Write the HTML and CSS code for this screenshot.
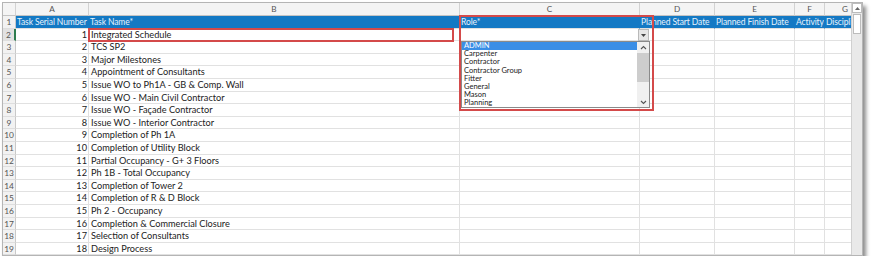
FILE: index.html
```html
<!DOCTYPE html>
<html lang="en">
<head>
    <meta charset="UTF-8">
    <title>Task Import - Role</title>
    <link rel="stylesheet" href="styles.css">
</head>
<body>
    <div class="window">
        <div class="sheet">
            <div class="row col-heads">
                <div class="corner"></div>
                <div>A</div><div>B</div><div>C</div><div>D</div><div>E</div><div>F</div><div class="right">G</div>
            </div>
            <div class="row titles">
                <div class="num">1</div>
                <div class="clip">Task Serial Number</div>
                <div>Task Name*</div>
                <div>Role*</div>
                <div>Planned Start Date</div>
                <div>Planned Finish Date</div>
                <div>Activity</div>
                <div class="clip">Discipline</div>
            </div>
            <div class="row active"><div class="num">2</div><div class="id">1</div><div class="name">Integrated Schedule</div><div></div><div></div><div></div><div></div><div></div></div>
            <div class="row"><div class="num">3</div><div class="id">2</div><div class="name">TCS SP2</div><div></div><div></div><div></div><div></div><div></div></div>
            <div class="row"><div class="num">4</div><div class="id">3</div><div class="name">Major Milestones</div><div></div><div></div><div></div><div></div><div></div></div>
            <div class="row"><div class="num">5</div><div class="id">4</div><div class="name">Appointment of Consultants</div><div></div><div></div><div></div><div></div><div></div></div>
            <div class="row"><div class="num">6</div><div class="id">5</div><div class="name">Issue WO to Ph1A - GB &amp; Comp. Wall</div><div></div><div></div><div></div><div></div><div></div></div>
            <div class="row"><div class="num">7</div><div class="id">6</div><div class="name">Issue WO - Main Civil Contractor</div><div></div><div></div><div></div><div></div><div></div></div>
            <div class="row"><div class="num">8</div><div class="id">7</div><div class="name">Issue WO - Façade Contractor</div><div></div><div></div><div></div><div></div><div></div></div>
            <div class="row"><div class="num">9</div><div class="id">8</div><div class="name">Issue WO - Interior Contractor</div><div></div><div></div><div></div><div></div><div></div></div>
            <div class="row"><div class="num">10</div><div class="id">9</div><div class="name">Completion of Ph 1A</div><div></div><div></div><div></div><div></div><div></div></div>
            <div class="row"><div class="num">11</div><div class="id">10</div><div class="name">Completion of Utility Block</div><div></div><div></div><div></div><div></div><div></div></div>
            <div class="row"><div class="num">12</div><div class="id">11</div><div class="name">Partial Occupancy - G+ 3 Floors</div><div></div><div></div><div></div><div></div><div></div></div>
            <div class="row"><div class="num">13</div><div class="id">12</div><div class="name">Ph 1B - Total Occupancy</div><div></div><div></div><div></div><div></div><div></div></div>
            <div class="row"><div class="num">14</div><div class="id">13</div><div class="name">Completion of Tower 2</div><div></div><div></div><div></div><div></div><div></div></div>
            <div class="row"><div class="num">15</div><div class="id">14</div><div class="name">Completion of R &amp; D Block</div><div></div><div></div><div></div><div></div><div></div></div>
            <div class="row"><div class="num">16</div><div class="id">15</div><div class="name">Ph 2 - Occupancy</div><div></div><div></div><div></div><div></div><div></div></div>
            <div class="row"><div class="num">17</div><div class="id">16</div><div class="name">Completion &amp; Commercial Closure</div><div></div><div></div><div></div><div></div><div></div></div>
            <div class="row"><div class="num">18</div><div class="id">17</div><div class="name">Selection of Consultants</div><div></div><div></div><div></div><div></div><div></div></div>
            <div class="row"><div class="num">19</div><div class="id">18</div><div class="name">Design Process</div><div></div><div></div><div></div><div></div><div></div></div>

            <!-- data validation dropdown on C2 -->
            <div class="drop-btn">
                <svg width="5" height="3" viewBox="0 0 5 3"><path d="M0 0H5L2.5 3Z" fill="#444"/></svg>
            </div>
            <div class="drop-list">
                <ul>
                    <li class="sel">ADMIN</li>
                    <li>Carpenter</li>
                    <li>Contractor</li>
                    <li>Contractor Group</li>
                    <li>Fitter</li>
                    <li>General</li>
                    <li>Mason</li>
                    <li>Planning</li>
                </ul>
                <div class="list-scroll">
                    <svg width="7" height="5" viewBox="0 0 7 5"><path d="M1 4L3.5 1.5L6 4" fill="none" stroke="#555" stroke-width="1.1"/></svg>
                    <div class="list-thumb"></div>
                    <svg width="7" height="5" viewBox="0 0 7 5"><path d="M1 1L3.5 3.5L6 1" fill="none" stroke="#555" stroke-width="1.1"/></svg>
                </div>
            </div>

            <!-- highlight boxes -->
            <div class="mark mark-name"></div>
            <div class="mark mark-role"></div>
        </div>
        <div class="vscroll">
            <div class="vs-btn">
                <svg width="5" height="3" viewBox="0 0 5 3"><path d="M0 3H5L2.5 0Z" fill="#666"/></svg>
            </div>
            <div class="vs-thumb"></div>
        </div>
    </div>
</body>
</html>
```

FILE: styles.css
```css
body {
    margin: 0;
    background: #fff;
    font-family: Lato, "Liberation Sans", sans-serif;
    font-size: 9.2px;
    color: #222;
}
.window {
    margin: 2px 0 0 2px;
    width: 859px;
    height: 252px;
    border: 1px solid #b5b5b5;
    display: flex;
    box-shadow: 3px 4px 4px rgba(0, 0, 0, 0.45);
    background: #fff;
}
.sheet {
    position: relative;
    width: 849px;
    overflow: hidden;
}
.row {
    display: grid;
    grid-template-columns: 13px 73px 371px 180px 75px 80px 30px 27px;
    height: 12.6px;
}
.row > div {
    box-sizing: border-box;
    border-right: 1px solid #e1e1e1;
    border-bottom: 1px solid #e1e1e1;
    line-height: 12px;
    white-space: nowrap;
    overflow: hidden;
}
.row .num {
    background: #f2f2f2;
    border-right: 1px solid #c9c9c9;
    border-bottom: 1px solid #dedede;
    color: #555;
    text-align: center;
    font-size: 8.4px;
}
.row.active .num {
    background: #e2e2e2;
    border-right: 2px solid #2e7d4f;
}
.row .id {
    text-align: right;
    padding-right: 1px;
}
.row .name {
    padding-left: 2px;
}

/* column letters */
.col-heads {
    height: 13px;
}
.col-heads > div {
    background: #f4f4f4;
    border-right: 1px solid #d2d2d2;
    border-bottom: 1px solid #c4c4c4;
    text-align: center;
    color: #555;
    font-size: 8.2px;
}
.col-heads .right {
    text-align: right;
    padding-right: 3px;
}
.col-heads .corner {
    background: #f4f4f4;
}

/* header row */
.titles > div {
    background: #1479c4;
    color: #e6f2fc;
    border-right: 1px solid #1479c4;
    border-bottom: 1px solid #e1e1e1;
    padding-left: 1px;
    font-size: 8.5px;
    letter-spacing: -0.1px;
}
.titles > div.num {
    background: #f2f2f2;
    color: #555;
    border-right: 1px solid #c9c9c9;
    padding-left: 0;
    font-size: 8.4px;
    letter-spacing: 0;
}
.titles .clip {
    text-overflow: clip;
}

/* dropdown */
.drop-btn {
    position: absolute;
    left: 635px;
    top: 26px;
    width: 11px;
    height: 12px;
    box-sizing: border-box;
    background: #e6e6e6;
    border: 1px solid #b9b9b9;
    display: flex;
    align-items: center;
    justify-content: center;
}
.drop-list {
    position: absolute;
    left: 458px;
    top: 38px;
    width: 189px;
    height: 67px;
    background: #fff;
    border: 1px solid #8a8a8a;
    box-sizing: border-box;
    display: flex;
}
.drop-list ul {
    flex: 1;
    list-style: none;
    margin: 0;
    padding: 0;
    font-size: 7.5px;
    color: #222;
}
.drop-list li {
    height: 8.2px;
    line-height: 8.4px;
    padding-left: 2px;
}
.drop-list li.sel {
    background: #3a8ee6;
    color: #fff;
}
.list-scroll {
    width: 12px;
    background: #f0f0f0;
    display: flex;
    flex-direction: column;
    align-items: center;
    padding: 3px 0 2px;
    box-sizing: border-box;
    gap: 3px;
}
.list-thumb {
    width: 12px;
    height: 29px;
    background: #cdcdcd;
    margin-bottom: auto;
}

/* annotation boxes */
.mark {
    position: absolute;
    border: 2px solid #d44a4a;
    box-sizing: border-box;
}
.mark-name {
    left: 85px;
    top: 25px;
    width: 366px;
    height: 14px;
}
.mark-role {
    left: 456px;
    top: 12px;
    width: 195px;
    height: 96px;
}

/* sheet scrollbar */
.vscroll {
    width: 10px;
    background: #e9e9e9;
    border-left: 1px solid #d0d0d0;
    display: flex;
    flex-direction: column;
    align-items: center;
}
.vs-btn {
    width: 10px;
    height: 10px;
    background: #fff;
    border: 1px solid #bcbcbc;
    box-sizing: border-box;
    display: flex;
    align-items: center;
    justify-content: center;
}
.vs-thumb {
    width: 8px;
    height: 20px;
    margin-top: 1px;
    background: #fff;
    border: 1px solid #bcbcbc;
    box-sizing: border-box;
}
```
